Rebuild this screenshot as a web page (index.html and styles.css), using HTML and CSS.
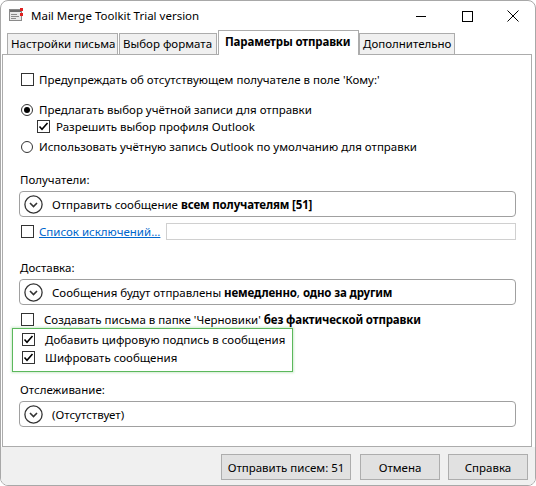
FILE: index.html
```html
<!DOCTYPE html>
<html lang="ru">
<head>
<meta charset="utf-8">
<link rel="stylesheet" href="styles.css">
</head>
<body>
<div class="window">
  <div class="titlebar">
    <svg class="app-icon" width="14" height="14" viewBox="0 0 14 14">
      <rect x="0.5" y="1.5" width="12" height="11" fill="#e8e8e8" stroke="#8a8a8a"/>
      <rect x="1" y="2" width="11" height="2" fill="#6b6b6b"/>
      <rect x="2" y="6" width="6" height="1" fill="#8a8a8a"/>
      <rect x="2" y="8" width="8" height="1" fill="#8a8a8a"/>
      <rect x="2" y="10" width="5" height="1" fill="#8a8a8a"/>
      <rect x="11" y="0" width="3" height="3" fill="#e02020"/>
      <rect x="11" y="5" width="3" height="3" fill="#e02020"/>
    </svg>
    <span class="title">Mail Merge Toolkit Trial version</span>
    <div class="controls">
      <svg width="46" height="30" viewBox="0 0 46 30"><line x1="18" y1="15.5" x2="28" y2="15.5" stroke="#000" stroke-width="1"/></svg>
      <svg width="46" height="30" viewBox="0 0 46 30"><rect x="18.5" y="10.5" width="10" height="10" fill="none" stroke="#000" stroke-width="1"/></svg>
      <svg width="46" height="30" viewBox="0 0 46 30"><path d="M17.5 9.5 L28.5 20.5 M28.5 9.5 L17.5 20.5" stroke="#000" stroke-width="1"/></svg>
    </div>
  </div>

  <div class="tabstrip">
    <div class="tab">Настройки письма</div>
    <div class="tab">Выбор формата</div>
    <div class="tab active">Параметры отправки</div>
    <div class="tab">Дополнительно</div>
  </div>

  <div class="panel">
    <div class="row row-first">
      <span class="cb"></span>
      <span class="lbl">Предупреждать об отсутствующем получателе в поле 'Кому:'</span>
    </div>

    <div class="row row-radio1">
      <span class="rb on"></span>
      <span class="lbl">Предлагать выбор учётной записи для отправки</span>
    </div>
    <div class="row row-sub">
      <span class="cb on"><svg viewBox="0 0 13 13" width="13" height="13"><path d="M2.5 6.5 L5 9.2 L10.5 3" fill="none" stroke="#000" stroke-width="1.6"/></svg></span>
      <span class="lbl">Разрешить выбор профиля Outlook</span>
    </div>
    <div class="row row-radio2">
      <span class="rb"></span>
      <span class="lbl">Использовать учётную запись Outlook по умолчанию для отправки</span>
    </div>

    <div class="section-label sl-1">Получатели:</div>
    <div class="combo">
      <svg class="chev" width="19" height="19" viewBox="0 0 19 19"><circle cx="9.5" cy="9.5" r="8.6" fill="#fff" stroke="#333" stroke-width="1.3"/><path d="M6 8 L9.5 11.5 L13 8" fill="none" stroke="#333" stroke-width="1.6"/></svg>
      <span class="combo-text">Отправить сообщение <b>всем получателям [51]</b></span>
    </div>
    <div class="row row-excl">
      <span class="cb"></span>
      <a class="link" href="#">Список исключений...</a>
      <span class="textbox"></span>
    </div>

    <div class="section-label sl-2">Доставка:</div>
    <div class="combo">
      <svg class="chev" width="19" height="19" viewBox="0 0 19 19"><circle cx="9.5" cy="9.5" r="8.6" fill="#fff" stroke="#333" stroke-width="1.3"/><path d="M6 8 L9.5 11.5 L13 8" fill="none" stroke="#333" stroke-width="1.6"/></svg>
      <span class="combo-text">Сообщения будут отправлены <b>немедленно</b>, <b>одно за другим</b></span>
    </div>
    <div class="row row-draft">
      <span class="cb"></span>
      <span class="lbl wide">Создавать письма в папке 'Черновики' <b>без фактической отправки</b></span>
    </div>
    <div class="highlight">
      <div class="row row-hl">
        <span class="cb on"><svg viewBox="0 0 13 13" width="13" height="13"><path d="M2.5 6.5 L5 9.2 L10.5 3" fill="none" stroke="#000" stroke-width="1.6"/></svg></span>
        <span class="lbl wide">Добавить цифровую подпись в сообщения</span>
      </div>
      <div class="row row-hl">
        <span class="cb on"><svg viewBox="0 0 13 13" width="13" height="13"><path d="M2.5 6.5 L5 9.2 L10.5 3" fill="none" stroke="#000" stroke-width="1.6"/></svg></span>
        <span class="lbl wide">Шифровать сообщения</span>
      </div>
    </div>

    <div class="section-label sl-3">Отслеживание:</div>
    <div class="combo">
      <svg class="chev" width="19" height="19" viewBox="0 0 19 19"><circle cx="9.5" cy="9.5" r="8.6" fill="#fff" stroke="#333" stroke-width="1.3"/><path d="M6 8 L9.5 11.5 L13 8" fill="none" stroke="#333" stroke-width="1.6"/></svg>
      <span class="combo-text">(Отсутствует)</span>
    </div>
  </div>

  <div class="footer">
    <button class="btn btn-send">Отправить писем: 51</button>
    <button class="btn">Отмена</button>
    <button class="btn">Справка</button>
  </div>
</div>
</body>
</html>
```

FILE: styles.css
```css
* { box-sizing: border-box; }
html, body { margin: 0; padding: 0; background: #ffffff; }
body {
  font-family: "Noto Sans", "Open Sans", "DejaVu Sans", sans-serif;
  font-size: 11.5px;
  color: #000;
}
b { letter-spacing: -0.15px; }
.window {
  width: 536px;
  height: 486px;
  border: 1px solid #a8a8a8;
  border-radius: 8px;
  overflow: hidden;
  background: #fff;
  display: flex;
  flex-direction: column;
}
.titlebar {
  height: 29px;
  display: flex;
  align-items: center;
  flex: none;
}
.app-icon { margin-left: 8px; margin-top: -1px; }
.title { margin-left: 8px; font-size: 11.5px; }
.controls { margin-left: auto; display: flex; margin-right: -1px; }
.controls svg { display: block; }

.tabstrip {
  height: 24px;
  display: flex;
  align-items: flex-end;
  padding-left: 6px;
  flex: none;
  position: relative;
  z-index: 1;
}
.tab {
  height: 21px;
  background: #f0f0f0;
  border: 1px solid #acacac;
  border-bottom: none;
  padding: 0 3px 0 3px;
  line-height: 20px;
  margin-right: 1px;
  white-space: nowrap;
  color: #000;
  overflow: hidden;
}
.tab:nth-child(1) { width: 111px; }
.tab:nth-child(2) { width: 98px; }
.tab:nth-child(4) { width: 96px; }
.tab.active {
  height: 25px;
  width: 141px;
  background: #fff;
  font-weight: bold;
  padding-left: 6px;
  line-height: 22px;
  margin-bottom: -1px;
  margin-right: 0;
}
.tab.active { letter-spacing: -0.15px; }

.panel {
  flex: none;
  height: 393px;
  margin: 0 3px 0 1px;
  border: 1px solid #acacac;
  background: #fff;
  padding: 15px 15px 0 16px;
}
.row {
  display: flex;
  align-items: center;
  height: 18px;
  white-space: nowrap;
}
.cb {
  width: 13px;
  height: 13px;
  border: 1px solid #333;
  background: #fff;
  flex: none;
  margin-left: 2px;
  position: relative;
}
.cb svg { position: absolute; left: -1px; top: -1px; }
.rb {
  width: 12px;
  height: 12px;
  border: 1px solid #333;
  border-radius: 50%;
  background: #fff;
  flex: none;
  margin-left: 2px;
  position: relative;
}
.rb.on::after {
  content: "";
  position: absolute;
  left: 2px; top: 2px;
  width: 6px; height: 6px;
  border-radius: 50%;
  background: #000;
}
.lbl { margin-left: 5px; }
.lbl.wide { margin-left: 10px; }
.row-radio1 { margin-top: 13px; height: 17px; }
.row-radio1 .lbl { margin-left: 6px; }
.row-sub { height: 17px; }
.row-sub .cb { margin-left: 18px; }
.row-sub .lbl { margin-left: 6px; }
.row-radio2 { margin-top: 3px; height: 17px; }
.row-radio2 .lbl { margin-left: 6px; }

.section-label { height: 18px; line-height: 18px; padding-left: 1px; }
.sl-1 { margin-top: 16px; }
.sl-2 { margin-top: 19px; }
.sl-3 { margin-top: 9px; }

.combo {
  margin-top: 2px;
  height: 26px;
  border: 1px solid #a0a0a0;
  border-radius: 4px;
  background: #fff;
  display: flex;
  align-items: center;
  padding-left: 4px;
}
.chev { flex: none; display: block; }
.combo-text { margin-left: 9px; white-space: nowrap; }

.row-excl { margin-top: 6px; height: 17px; }
.link { color: #0066cc; text-decoration: underline; margin-left: 5px; }
.textbox {
  flex: 1;
  height: 17px;
  margin-left: 6px;
  border: 1px solid #d0d0d0;
  background: #fff;
}

.row-draft { margin-top: 5px; }
.highlight {
  margin-left: -7px;
  width: 281px;
  height: 44px;
  border: 1px solid #5cb85c;
  box-shadow: 0 0 2px 1px rgba(120, 200, 120, 0.35);
  padding: 1px 0 0 7px;
}
.row-hl { height: 18px; }

.footer {
  flex: 1;
  background: #f0f0f0;
  display: flex;
  justify-content: flex-end;
  align-items: flex-start;
  padding: 7px 7px 0 0;
  gap: 8px;
}
.btn {
  height: 26px;
  width: 80px;
  border: 1px solid #adadad;
  background: #e1e1e1;
  font-family: inherit;
  font-size: 11.5px;
  color: #000;
  padding: 0;
  border-radius: 0;
}
.btn-send { width: 130px; margin-right: 1px; }
```
